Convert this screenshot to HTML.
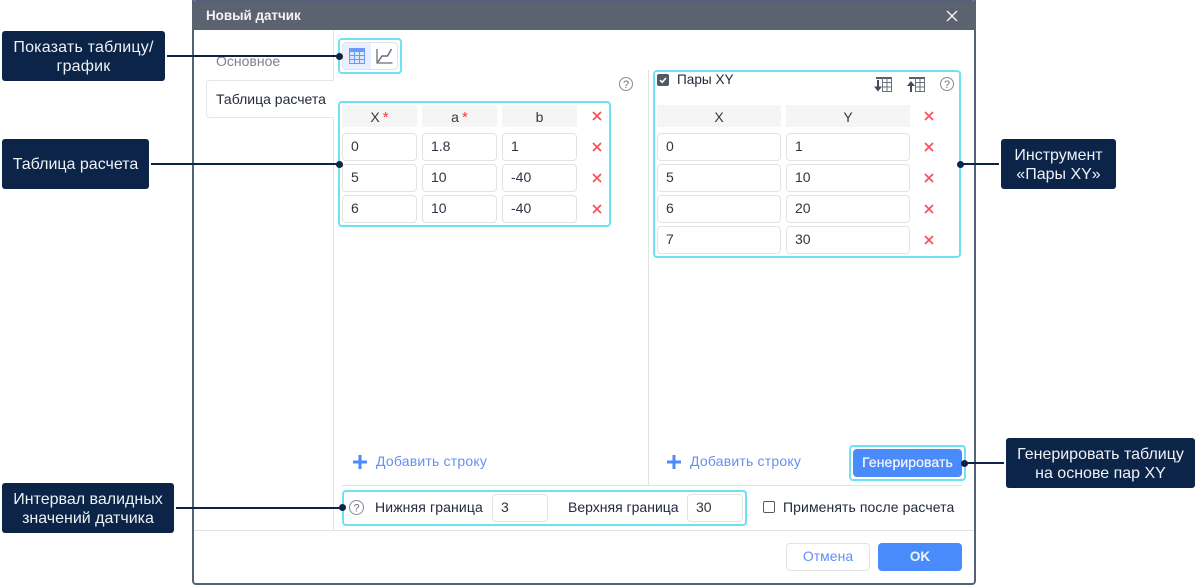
<!DOCTYPE html>
<html><head><meta charset="utf-8">
<style>
html,body{margin:0;padding:0;background:#fff;}
body{width:1197px;height:585px;overflow:hidden;position:relative;font-family:"Liberation Sans",sans-serif;font-size:14px;color:#232a3b;}
.a{position:absolute;box-sizing:border-box;}
.t{position:absolute;white-space:nowrap;line-height:16px;}
.cy{position:absolute;box-sizing:border-box;border:2px solid #6de2f2;border-radius:4px;}
.th{position:absolute;box-sizing:border-box;background:#f5f5f5;height:22px;line-height:25px;text-align:center;color:#333845;}
.th i{font-style:normal;color:#f33;margin-left:3px;font-size:15px;}
.in{position:absolute;box-sizing:border-box;height:28px;border:1px solid #e3e3e3;border-radius:4px;background:#fff;line-height:25px;padding-left:8px;color:#2e3544;}
.lb{position:absolute;box-sizing:border-box;background:#0b2447;color:#eef1f5;border-radius:3px;text-align:center;height:50px;font-size:16px;line-height:19px;display:flex;align-items:center;justify-content:center;}
.ln{position:absolute;background:#0b2447;height:2px;}
.dot{position:absolute;width:7px;height:7px;border-radius:50%;background:#0b2447;}
svg{position:absolute;overflow:visible;}
</style></head><body>

<!-- dialog -->
<div class="a" style="left:192px;top:0;width:784px;height:585px;border:2px solid #566278;border-top:0;border-radius:0 0 4px 4px;background:#fff;"></div>
<div class="a" style="left:192px;top:0;width:784px;height:30px;background:#5b6270;border-radius:4px 4px 0 0;border-top:1px solid #50607a;"></div>
<div class="t" style="left:206px;top:8px;color:#f3f4f6;font-weight:bold;font-size:13.4px;">Новый датчик</div>
<svg style="left:946px;top:10px" width="12" height="12"><path d="M1 1L11 11M11 1L1 11" stroke="#f2f3f5" stroke-width="1.4" fill="none"/></svg>

<!-- sidebar -->
<div class="a" style="left:333px;top:30px;width:1px;height:500px;background:#e3e3e3;"></div>
<div class="t" style="left:216px;top:53px;color:#7f828a;">Основное</div>
<div class="a" style="left:206px;top:80px;width:128px;height:38px;border:1px solid #e6e6e6;border-right:1px solid #fff;border-radius:4px 0 0 4px;background:#fff;"></div>
<div class="t" style="left:216px;top:90.5px;color:#232a3b;">Таблица расчета</div>

<!-- toggle -->
<div class="cy" style="left:338px;top:38px;width:64px;height:36px;"></div>
<div class="a" style="left:342px;top:42px;width:56px;height:28px;border:1px solid #e3e3e3;border-radius:4px;background:#fff;"></div>
<div class="a" style="left:343px;top:43px;width:28px;height:26px;background:#e8f0ff;border-radius:3px 0 0 3px;"></div>
<svg style="left:349px;top:48px" width="16" height="16"><rect x="0.5" y="0.5" width="15" height="15" fill="#dce8ff" stroke="#6c9af7"/><rect x="0" y="0" width="16" height="4" fill="#6c9af7"/><path d="M0 7.5H16M0 11.5H16M5.5 0V16M10.5 0V16" stroke="#6c9af7" stroke-width="1" fill="none"/></svg>
<svg style="left:376px;top:48px" width="17" height="17"><path d="M1 1V15H16.5" stroke="#666c7a" stroke-width="1.3" fill="none"/><path d="M2 14L6 8H11.5L15.5 1" stroke="#666c7a" stroke-width="1.5" fill="none"/></svg>

<!-- help 1 -->
<svg style="left:619px;top:77px" width="14" height="14"><circle cx="7" cy="7" r="6.5" fill="none" stroke="#868a94" stroke-width="1"/><text x="7" y="11" font-family="Liberation Sans" font-size="11" text-anchor="middle" fill="#6f7480">?</text></svg>

<!-- left table -->
<div class="cy" style="left:338px;top:101px;width:273px;height:126px;"></div>
<div class="th" style="left:342px;top:105px;width:75px;">X<i>*</i></div>
<div class="th" style="left:422px;top:105px;width:75px;">a<i>*</i></div>
<div class="th" style="left:502px;top:105px;width:75px;">b</div>
<div class="in" style="left:342px;top:133px;width:75px;">0</div><div class="in" style="left:422px;top:133px;width:75px;">1.8</div><div class="in" style="left:502px;top:133px;width:75px;">1</div>
<div class="in" style="left:342px;top:164px;width:75px;">5</div><div class="in" style="left:422px;top:164px;width:75px;">10</div><div class="in" style="left:502px;top:164px;width:75px;">-40</div>
<div class="in" style="left:342px;top:195px;width:75px;">6</div><div class="in" style="left:422px;top:195px;width:75px;">10</div><div class="in" style="left:502px;top:195px;width:75px;">-40</div>
<svg style="left:592px;top:111px" width="10" height="10"><path d="M1 1L9 9M9 1L1 9" stroke="#f6505a" stroke-width="1.7"/></svg>
<svg style="left:592px;top:142px" width="10" height="10"><path d="M1 1L9 9M9 1L1 9" stroke="#f6505a" stroke-width="1.7"/></svg>
<svg style="left:592px;top:173px" width="10" height="10"><path d="M1 1L9 9M9 1L1 9" stroke="#f6505a" stroke-width="1.7"/></svg>
<svg style="left:592px;top:204px" width="10" height="10"><path d="M1 1L9 9M9 1L1 9" stroke="#f6505a" stroke-width="1.7"/></svg>

<!-- divider -->
<div class="a" style="left:648px;top:70px;width:1px;height:415px;background:#e3e3e3;"></div>

<!-- right panel -->
<div class="cy" style="left:653px;top:70px;width:308px;height:188px;"></div>
<div class="a" style="left:657px;top:74px;width:12px;height:12px;background:#525866;border-radius:2px;"></div>
<svg style="left:659px;top:76px" width="8" height="8"><path d="M1 4.2L3.2 6.2L7 2" stroke="#fff" stroke-width="1.6" fill="none"/></svg>
<div class="t" style="left:677px;top:72px;color:#232a3b;font-size:13.6px;">Пары XY</div>
<svg style="left:874px;top:77px" width="18" height="15"><path d="M2 1H18" stroke="#585e6c" stroke-width="2"/><path d="M8.5 1V14.5H17.5V1M8.5 5.5H17.5M8.5 10H17.5M13 1V14.5" stroke="#6a6f7c" stroke-width="1" fill="none"/><path d="M4 3V10" stroke="#444a58" stroke-width="2"/><path d="M0 9.5H8L4 14.5Z" fill="#444a58"/></svg>
<svg style="left:907px;top:77px" width="18" height="15"><path d="M2 1H18" stroke="#585e6c" stroke-width="2"/><path d="M8.5 1V14.5H17.5V1M8.5 5.5H17.5M8.5 10H17.5M13 1V14.5" stroke="#6a6f7c" stroke-width="1" fill="none"/><path d="M4 8V15" stroke="#444a58" stroke-width="2"/><path d="M0 9H8L4 4Z" fill="#444a58"/></svg>
<svg style="left:940px;top:77px" width="14" height="14"><circle cx="7" cy="7" r="6.5" fill="none" stroke="#868a94" stroke-width="1"/><text x="7" y="11" font-family="Liberation Sans" font-size="11" text-anchor="middle" fill="#6f7480">?</text></svg>
<div class="th" style="left:657px;top:105px;width:124px;">X</div>
<div class="th" style="left:786px;top:105px;width:124px;">Y</div>
<div class="in" style="left:657px;top:133px;width:124px;">0</div><div class="in" style="left:786px;top:133px;width:124px;">1</div>
<div class="in" style="left:657px;top:164px;width:124px;">5</div><div class="in" style="left:786px;top:164px;width:124px;">10</div>
<div class="in" style="left:657px;top:195px;width:124px;">6</div><div class="in" style="left:786px;top:195px;width:124px;">20</div>
<div class="in" style="left:657px;top:226px;width:124px;">7</div><div class="in" style="left:786px;top:226px;width:124px;">30</div>
<svg style="left:924px;top:111px" width="10" height="10"><path d="M1 1L9 9M9 1L1 9" stroke="#f6505a" stroke-width="1.7"/></svg>
<svg style="left:924px;top:142px" width="10" height="10"><path d="M1 1L9 9M9 1L1 9" stroke="#f6505a" stroke-width="1.7"/></svg>
<svg style="left:924px;top:173px" width="10" height="10"><path d="M1 1L9 9M9 1L1 9" stroke="#f6505a" stroke-width="1.7"/></svg>
<svg style="left:924px;top:204px" width="10" height="10"><path d="M1 1L9 9M9 1L1 9" stroke="#f6505a" stroke-width="1.7"/></svg>
<svg style="left:924px;top:235px" width="10" height="10"><path d="M1 1L9 9M9 1L1 9" stroke="#f6505a" stroke-width="1.7"/></svg>

<!-- add rows -->
<svg style="left:353px;top:455px" width="14" height="14"><path d="M7 0V14M0 7H14" stroke="#4d8bfb" stroke-width="3"/></svg>
<div class="t" style="left:376px;top:453px;color:#648ff5;letter-spacing:.2px;">Добавить строку</div>
<svg style="left:667px;top:455px" width="14" height="14"><path d="M7 0V14M0 7H14" stroke="#4d8bfb" stroke-width="3"/></svg>
<div class="t" style="left:690px;top:453px;color:#648ff5;letter-spacing:.2px;">Добавить строку</div>

<!-- generate -->
<div class="cy" style="left:849px;top:445px;width:117px;height:36px;"></div>
<div class="a" style="left:853px;top:449px;width:109px;height:28px;background:#4a8bfb;border-radius:4px;color:#f1f5ff;text-align:center;line-height:27px;letter-spacing:.1px;-webkit-text-stroke:.25px #f1f5ff;">Генерировать</div>

<div class="a" style="left:342px;top:485px;width:620px;height:1px;background:#e3e3e3;"></div>

<!-- bounds -->
<div class="cy" style="left:342px;top:490px;width:405px;height:36px;"></div>
<svg style="left:349px;top:500px" width="15" height="15"><circle cx="7.5" cy="7.5" r="7" fill="none" stroke="#868a94" stroke-width="1"/><text x="7.5" y="11.5" font-family="Liberation Sans" font-size="11" text-anchor="middle" fill="#6f7480">?</text></svg>
<div class="t" style="left:375px;top:499px;letter-spacing:.13px;">Нижняя граница</div>
<div class="in" style="left:492px;top:494px;width:56px;">3</div>
<div class="t" style="left:568px;top:499px;">Верхняя граница</div>
<div class="in" style="left:687px;top:494px;width:56px;">30</div>
<div class="a" style="left:763px;top:501px;width:12px;height:12px;border:1px solid #555a66;border-radius:2px;background:#fff;"></div>
<div class="t" style="left:783px;top:499px;letter-spacing:.09px;">Применять после расчета</div>

<!-- footer -->
<div class="a" style="left:194px;top:530px;width:780px;height:1px;background:#e3e3e3;"></div>
<div class="a" style="left:786px;top:543px;width:84px;height:28px;border:1px solid #e3e3e3;border-radius:4px;color:#648ff5;text-align:center;line-height:25px;">Отмена</div>
<div class="a" style="left:878px;top:543px;width:84px;height:28px;background:#4a8bfb;border-radius:4px;color:#f1f5ff;text-align:center;line-height:27px;font-weight:bold;font-size:13.5px;">OK</div>

<!-- callouts -->
<div class="ln" style="left:167px;top:55px;width:171px;"></div><div class="dot" style="left:335.5px;top:52.5px;"></div>
<div class="ln" style="left:151px;top:163px;width:189px;"></div><div class="dot" style="left:335.5px;top:160.5px;"></div>
<div class="ln" style="left:176px;top:507px;width:166px;"></div><div class="dot" style="left:339px;top:504px;"></div>
<div class="ln" style="left:960px;top:163px;width:39px;"></div><div class="dot" style="left:956.5px;top:160.5px;"></div>
<div class="ln" style="left:964px;top:462px;width:40px;"></div><div class="dot" style="left:961px;top:459.5px;"></div>

<div class="lb" style="left:2px;top:31px;width:163px;padding-top:1px;"><span style="letter-spacing:.2px">Показать таблицу/<br>график</span></div>
<div class="lb" style="left:2px;top:139px;width:147px;">Таблица расчета</div>
<div class="lb" style="left:2px;top:483px;width:172px;padding-top:1px;"><span>Интервал валидных<br>значений датчика</span></div>
<div class="lb" style="left:1001px;top:139px;width:115px;padding-top:1px;"><span>Инструмент<br>«Пары XY»</span></div>
<div class="lb" style="left:1006px;top:438px;width:189px;padding-top:1px;"><span>Генерировать таблицу<br>на основе пар XY</span></div>
</body></html>
